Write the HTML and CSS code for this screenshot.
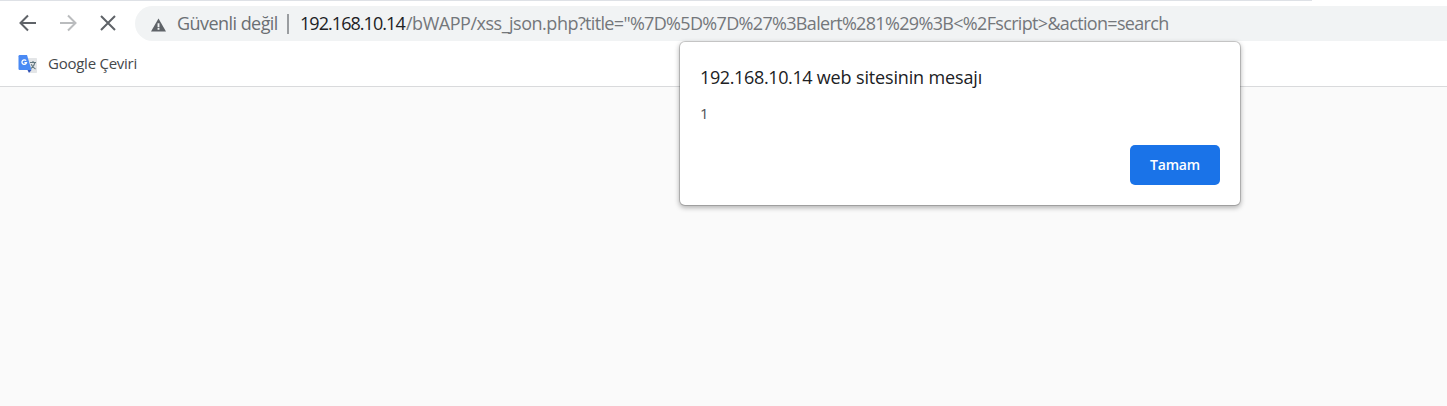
FILE: index.html
```html
<!DOCTYPE html>
<html lang="tr">
<head>
<meta charset="utf-8">
<title>192.168.10.14</title>
<link rel="stylesheet" href="styles.css">
</head>
<body>
<div class="tab-edge"></div>
<header class="toolbar">
  <nav class="nav">
    <svg class="nav-icon" viewBox="0 0 20 20"><path d="M18 10H3M10 2.500L2.500 10L10 17.500"/></svg>
    <svg class="nav-icon disabled" viewBox="0 0 20 20"><path d="M2 10H17M10 2.500L17.500 10L10 17.500"/></svg>
    <svg class="nav-icon" viewBox="0 0 20 20"><path d="M3 3L17 17M17 3L3 17"/></svg>
  </nav>
  <div class="omnibox">
    <svg class="warning" viewBox="0 0 16 14"><path fill="#5f6368" d="M8 0L16 14H0Z"/><path fill="#f1f3f4" d="M7 5h2v4H7zM7 10h2v2H7z"/></svg>
    <span class="security">Güvenli değil</span>
    <span class="divider"></span>
    <span class="host">192.168.10.14</span><span class="path"><span class="file">/bWAPP/xss_json.php</span>?title="%7D%5D%7D%27%3Balert%281%29%3B&lt;%2Fscript&gt;&amp;action=search</span>
  </div>
</header>
<div class="bookmarks">
  <svg class="translate" viewBox="0 0 20 20">
    <path fill="#e3e5e7" d="M9 4h9.300q.7 0 .7.700v13.600q0 .7-.7.700H12z"/>
    <path fill="#4a8af4" d="M1.700 1H9l4.500 15H1.700q-1.200 0-1.200-1.200V2.200q0-1.200 1.200-1.200z"/>
    <path fill="#3052b5" d="M9.500 16h4L11 19z"/>
    <path fill="none" stroke="#fff" stroke-width="1.300" d="M8.100 6.700A2.300 2.300 0 1 0 8.500 8.600H6.400"/>
    <path fill="none" stroke="#62777f" stroke-width="1.100" d="M12 8.500h6M15 7v1.500M17 8.500q-1 4-4 6M13.200 10.200q1.500 3.200 4.300 4.800"/>
  </svg>
  <span class="bookmark">Google Çeviri</span>
</div>
<main class="page"></main>
<section class="dialog">
  <h1 class="title"><span class="title-host">192.168.10.14</span> web sitesinin mesajı</h1>
  <p class="message">1</p>
  <button class="ok">Tamam</button>
</section>
</body>
</html>
```
FILE: styles.css
```css
* { box-sizing: border-box; }
body {
  margin: 0;
  height: 406px;
  display: flex;
  flex-direction: column;
  overflow: hidden;
  background: #fff;
  font-family: "Open Sans", "Noto Sans", sans-serif;
  white-space: nowrap;
}
.tab-edge { width: 1312px; height: 1px; background: #dee1e6; flex: none; }
.toolbar { display: flex; height: 40px; padding-top: 5px; flex: none; }
.nav { display: flex; align-items: center; gap: 20px; width: 135px; height: 34px; padding-left: 18px; }
.nav-icon { width: 20px; height: 20px; flex: none; fill: none; stroke: #5f6368; stroke-width: 2; }
.disabled { stroke: #babcbe; }
.omnibox {
  display: flex;
  align-items: center;
  flex: 1;
  height: 35px;
  padding-left: 16px;
  background: #f1f3f4;
  border-radius: 18px 0 0 18px;
  font-size: 18px;
  line-height: 24px;
}
.warning { width: 15px; height: 14px; margin-top: 2px; flex: none; }
.security { width: 102px; margin-left: 11px; padding-bottom: 2px; color: #6b6f73; letter-spacing: -0.550px; flex: none; }
.divider { width: 2px; height: 20px; margin: 0 11px 0 8px; background: #9a9da0; flex: none; }
.host { width: 106px; padding-bottom: 2px; color: #202124; letter-spacing: -0.950px; flex: none; }
.path { padding-bottom: 2px; color: #74777b; letter-spacing: -0.670px; }
.file { letter-spacing: -0.480px; }
.bookmarks {
  display: flex;
  align-items: center;
  height: 46px;
  padding-left: 18px;
  border-bottom: 1px solid #d9dadc;
  flex: none;
}
.translate { width: 20px; height: 20px; }
.bookmark { margin-left: 10px; padding-bottom: 2px; font-size: 15px; letter-spacing: -0.250px; color: #45484b; }
.page { flex: 1; background: #fafafa; }
.dialog {
  position: absolute;
  left: 680px;
  top: 42px;
  width: 560px;
  height: 163px;
  display: flex;
  flex-direction: column;
  padding: 23px 20px 20px;
  background: #fff;
  border-radius: 5px;
  box-shadow: 0 0 0 1px rgba(0, 0, 0, .17), 0 2px 5px 1px rgba(0, 0, 0, .28);
}
.title { margin: 0; font-size: 18px; line-height: 25px; font-weight: 400; letter-spacing: -0.150px; color: #202124; }
.title-host { letter-spacing: -0.370px; }
.message { margin: 13px 0 0; font-size: 15px; line-height: 20px; color: #4f5255; }
.ok {
  width: 90px;
  height: 40px;
  margin-top: auto;
  align-self: flex-end;
  padding: 0 0 2px;
  border: 0;
  border-radius: 5px;
  background: #1a73e8;
  color: #fff;
  font: 600 14px "Open Sans", sans-serif;
  letter-spacing: -0.200px;
}
```
